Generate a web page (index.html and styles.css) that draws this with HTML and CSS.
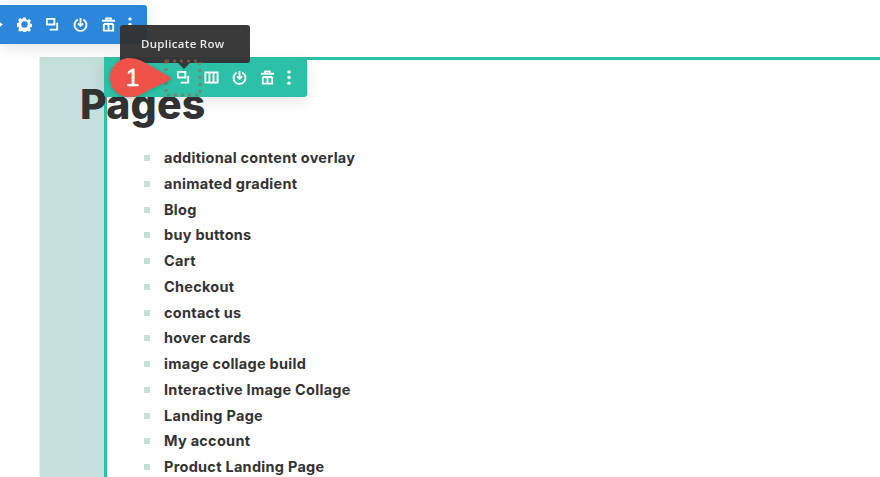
FILE: index.html
```html
<!DOCTYPE html>
<html lang="en">
<head>
<meta charset="utf-8">
<title>Pages</title>
<link rel="stylesheet" href="styles.css">
</head>
<body>
<div class="page">
  <aside class="gutter"></aside>
  <section class="row">
    <h1 class="title">Pages</h1>
    <ul class="pages">
      <li>additional content overlay</li>
      <li>animated gradient</li>
      <li>Blog</li>
      <li>buy buttons</li>
      <li>Cart</li>
      <li>Checkout</li>
      <li>contact us</li>
      <li>hover cards</li>
      <li>image collage build</li>
      <li>Interactive Image Collage</li>
      <li>Landing Page</li>
      <li>My account</li>
      <li>Product Landing Page</li>
    </ul>
  </section>
</div>

<div class="bar bar-section">
  <svg class="ico move" viewBox="0 0 16 16"><path d="M0 8h7M7 5l4 3-4 3z"/></svg>
  <svg class="ico" viewBox="0 0 16 16"><path class="fill" fill-rule="evenodd" d="M6.600 .5h2.800l.5 2.100 1.200.5 1.800-1.100 2 2-1.100 1.800.5 1.200 2.100.5v2.800l-2.100.5-.5 1.200 1.100 1.800-2 2-1.800-1.100-1.200.5-.5 2.100H6.600l-.5-2.100-1.200-.5-1.800 1.100-2-2 1.100-1.800-.5-1.200-2.100-.5V6.600l2.100-.5.5-1.200-1.100-1.800 2-2 1.800 1.100 1.200-.5zM8 4.600a3.400 3.400 0 1 0 0 6.800 3.400 3.400 0 0 0 0-6.800z"/></svg>
  <svg class="ico" viewBox="0 0 16 16"><path d="M2 2h8v6H2zM13 6v7.500H5"/></svg>
  <svg class="ico" viewBox="0 0 16 16"><path d="M5 2.800a6.400 6.400 0 1 0 6 0M8 1v8M5.300 6.800 8 9.500l2.700-2.700"/></svg>
  <svg class="ico" viewBox="0 0 16 16"><path d="M1 4h14M5.500 4V1.500h5V4M3 7.500h10M3 7.500V14.500h10V7.500M8 7.500v7"/></svg>
  <svg class="ico dots" viewBox="0 0 6 16"><circle cx="3" cy="2" r="1.800"/><circle cx="3" cy="8" r="1.800"/><circle cx="3" cy="14" r="1.800"/></svg>
</div>

<div class="bar bar-row">
  <svg class="ico" viewBox="0 0 16 16"><path d="M2 2h8v6H2zM13 6v7.500H5"/></svg>
  <svg class="ico" viewBox="0 0 16 16"><path d="M1.500 2.500h13v11h-13zM5.800 2.500v11M10.200 2.500v11"/></svg>
  <svg class="ico" viewBox="0 0 16 16"><path d="M5 2.800a6.400 6.400 0 1 0 6 0M8 1v8M5.300 6.800 8 9.500l2.700-2.700"/></svg>
  <svg class="ico" viewBox="0 0 16 16"><path d="M1 4h14M5.500 4V1.500h5V4M3 7.500h10M3 7.500V14.500h10V7.500M8 7.500v7"/></svg>
  <svg class="ico dots" viewBox="0 0 6 16"><circle cx="3" cy="2" r="1.800"/><circle cx="3" cy="8" r="1.800"/><circle cx="3" cy="14" r="1.800"/></svg>
</div>

<div class="tooltip">Duplicate Row</div>
<svg class="focus" viewBox="0 0 38 38"><rect x="2" y="2" width="34" height="34"/></svg>
<div class="marker">
  <svg viewBox="0 0 62 40"><path d="M19 0C9 0 0 9 0 20s9 19 19 19c8 0 14-3 20-7l21-10c1-1 1-2 0-3L39 7C32 3 27 0 19 0z"/></svg>
  <span>1</span>
</div>
</body>
</html>
```
FILE: styles.css
```css
html, body { margin: 0; height: 100%; overflow: hidden; background: #fff; }
body { font-family: "Inter", "Liberation Sans", sans-serif; color: #333; }

.page { display: flex; height: 477px; margin-left: 40px; padding-top: 57px; box-sizing: border-box; }
.gutter { width: 64px; background: #c5dfdb; box-shadow: -1px 0 0 #e6eeed; }
.row { flex: 1; border-top: 3px solid #2cc1a6; border-left: 3px solid #2cc1a6; position: relative; }

.title { margin: 16px 0 0 -27px; font-size: 41px; line-height: 56px; font-weight: 800; color: #333; position: relative; letter-spacing: .2px; }

.pages { list-style: none; margin: 13px 0 0; padding: 0 0 0 57px; }
.pages li { height: 25.75px; line-height: 25.75px; font-size: 14.500px; font-weight: 700; color: #333; letter-spacing: .27px; position: relative; }
.pages li::before { content: ""; position: absolute; left: -20px; top: 10px; width: 6px; height: 6px; background: #c5dfdb; }

.bar { position: absolute; display: flex; align-items: center; height: 39px; box-sizing: border-box; box-shadow: 0 4px 16px rgba(0,0,0,.1); gap: 13px; }
.bar-section { left: 0; top: 5px; width: 147px; background: #2b87da; padding-left: 17px; border-radius: 0 3px 3px 0; }
.bar-row { left: 104px; top: 58px; width: 203px; background: #2cc1a6; padding-left: 72px; border-radius: 0 3px 3px 3px; }

.ico { width: 15px; height: 15px; flex: none; fill: none; stroke: #fff; stroke-width: 2; }
.ico .fill { fill: #fff; stroke: none; }
.ico.dots { width: 6px; fill: #fff; stroke: none; margin-left: -2px; }
.bar-section .move { position: absolute; left: -9px; }

.tooltip { position: absolute; left: 120px; top: 25px; width: 130px; height: 38px; box-sizing: border-box; padding: 0 0 0 21px; background: #333; border-radius: 3px; color: #e8e8e8; font-family: "Open Sans", "Liberation Sans", sans-serif; font-size: 11.500px; font-weight: 600; line-height: 38px; letter-spacing: .3px; opacity: .96; }
.tooltip::after { content: ""; position: absolute; left: 58px; top: 38px; border: 6px solid transparent; border-top-color: #333; border-bottom: 0; }

.focus { position: absolute; left: 164px; top: 59px; width: 38px; height: 38px; fill: none; stroke: rgba(170,95,75,.6); stroke-width: 3; stroke-dasharray: 3 4; }

.marker { position: absolute; left: 110px; top: 58px; width: 62px; height: 40px; }
.marker svg { display: block; width: 62px; height: 40px; fill: #f0524a; filter: drop-shadow(0 1px 2px rgba(0,0,0,.2)); }
.marker span { position: absolute; left: 16px; top: 4px; color: #fff; font: 400 24px/32px "Liberation Sans", sans-serif; -webkit-text-stroke: .5px #fff; }
```
